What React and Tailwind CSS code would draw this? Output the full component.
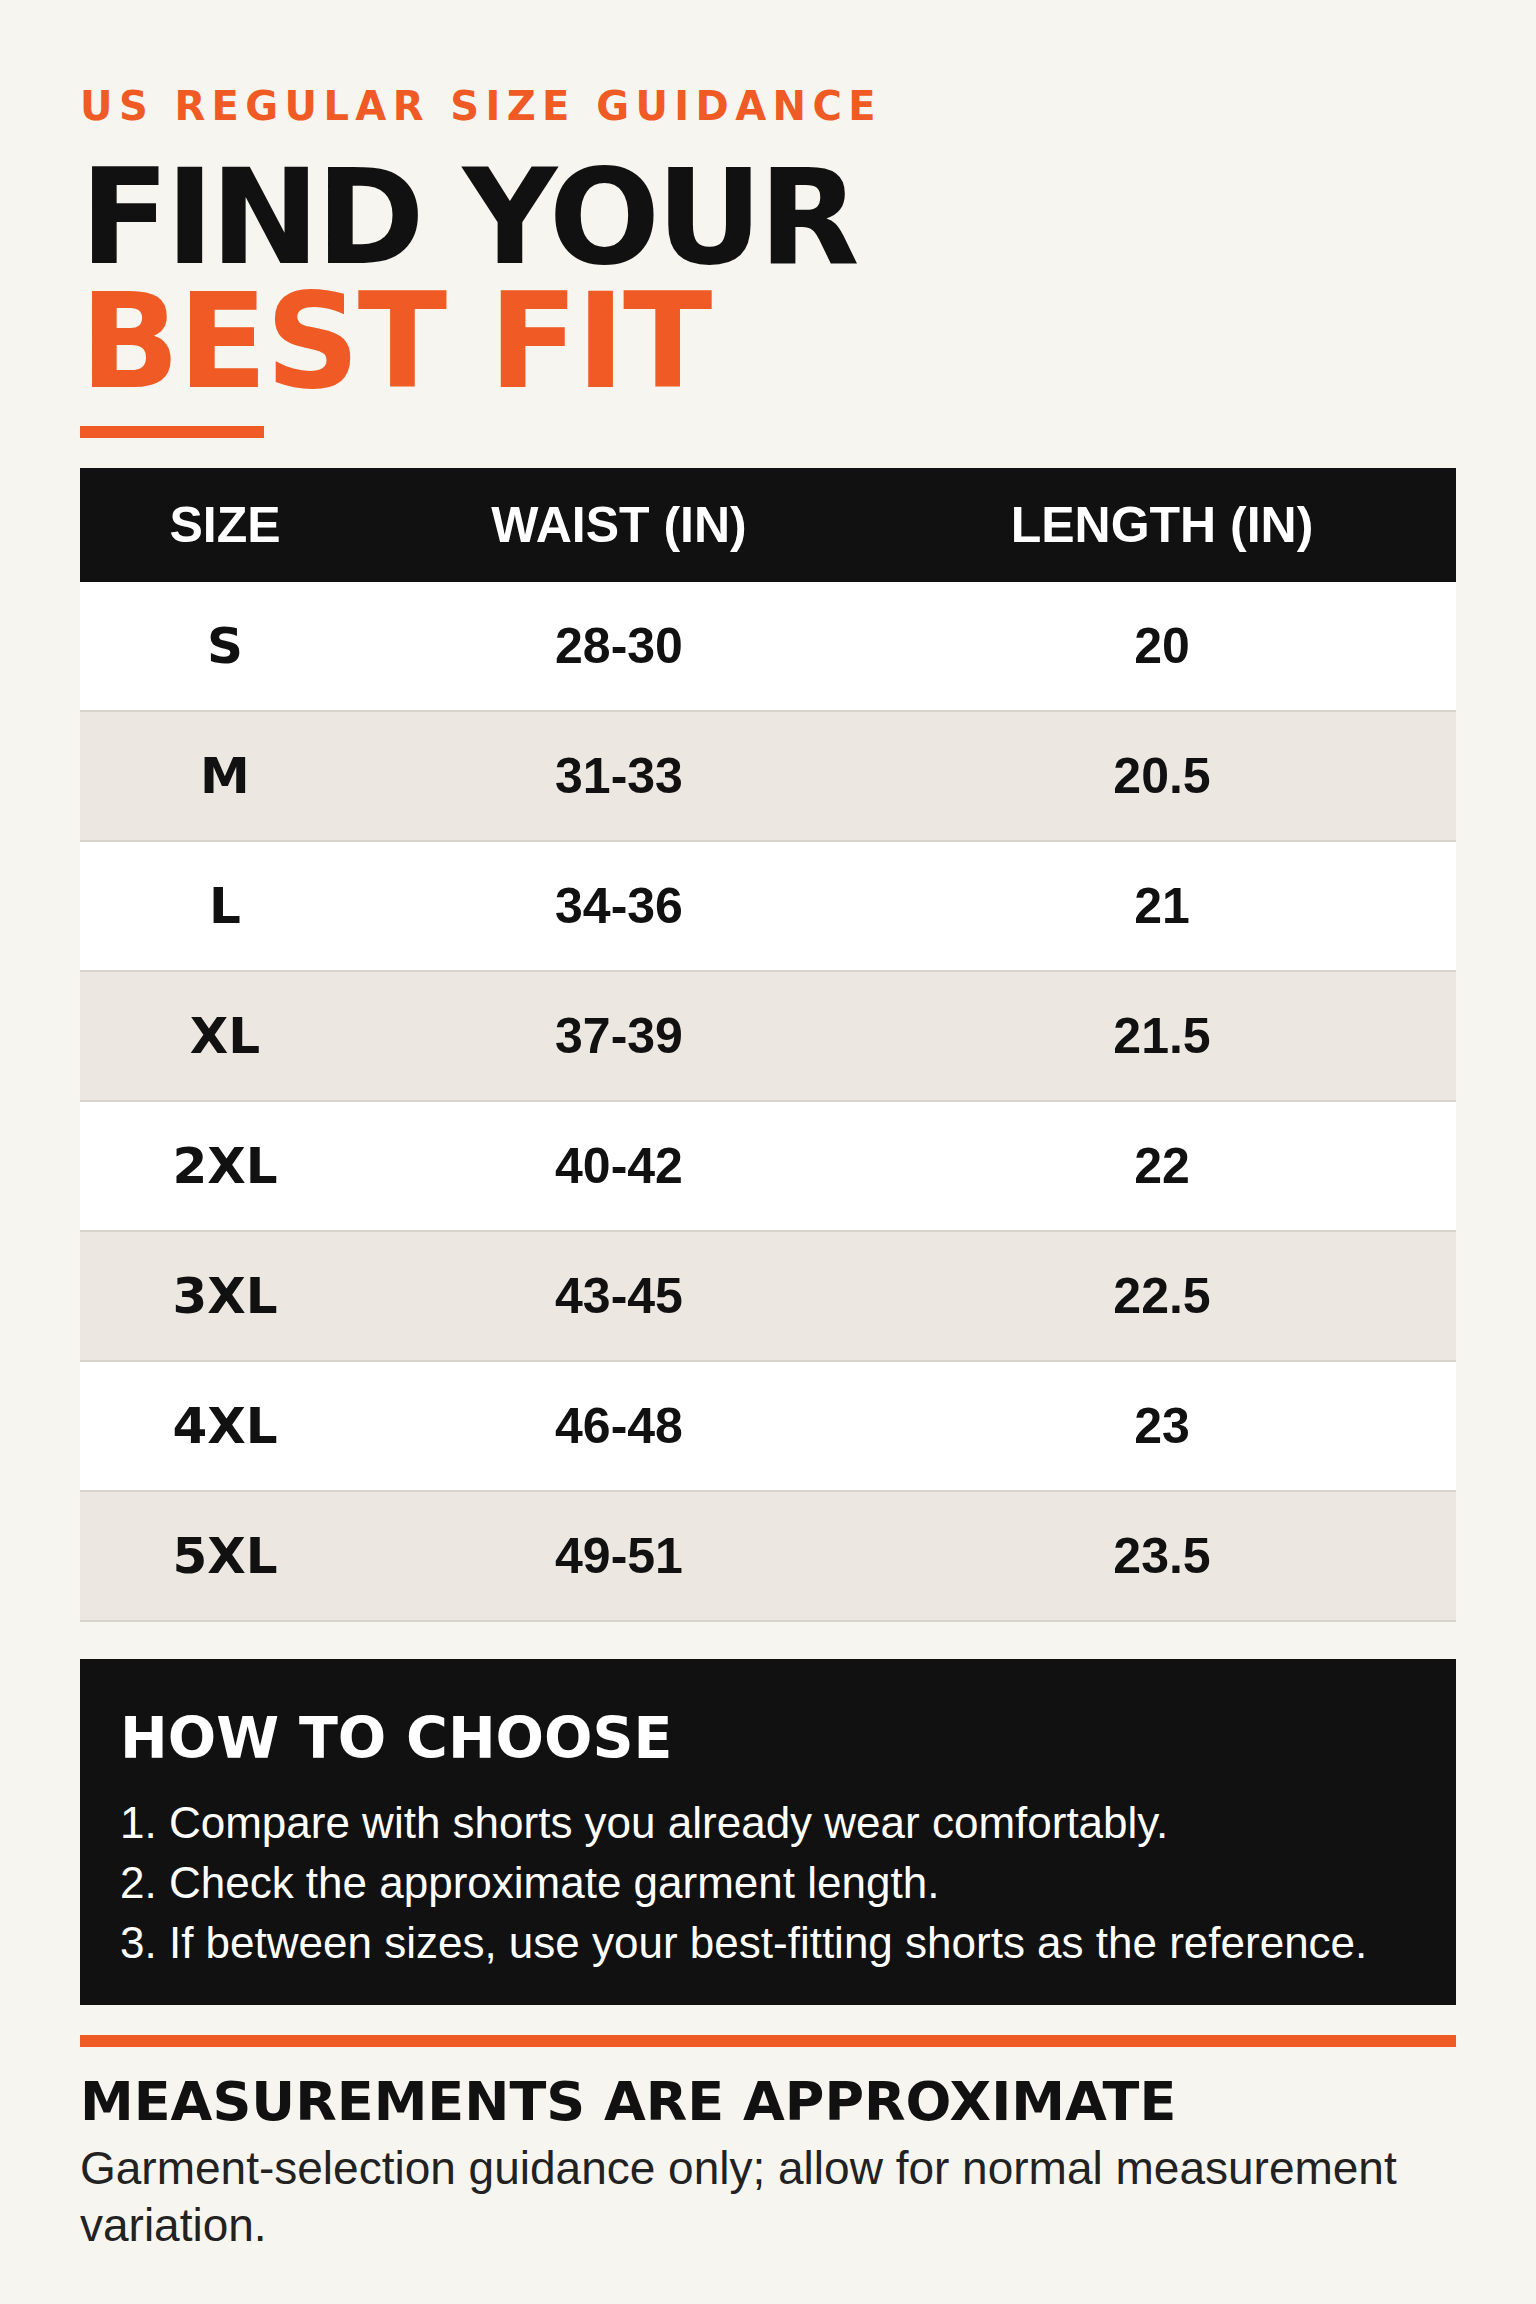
const rows = [
  { size: "S", waist: "28-30", length: "20" },
  { size: "M", waist: "31-33", length: "20.5" },
  { size: "L", waist: "34-36", length: "21" },
  { size: "XL", waist: "37-39", length: "21.5" },
  { size: "2XL", waist: "40-42", length: "22" },
  { size: "3XL", waist: "43-45", length: "22.5" },
  { size: "4XL", waist: "46-48", length: "23" },
  { size: "5XL", waist: "49-51", length: "23.5" },
];

const steps = [
  "1. Compare with shorts you already wear comfortably.",
  "2. Check the approximate garment length.",
  "3. If between sizes, use your best-fitting shorts as the reference.",
];

export default function App() {
  return (
    <div className="min-h-[2304px] bg-[#f6f5f0] px-20 pt-[86px] pb-12 font-['Liberation_Sans',Arial,sans-serif] text-[#111]">
      {/* heading */}
      <p className="font-['DejaVu_Sans',sans-serif] font-bold text-[40px] leading-[40px] tracking-[0.16em] text-[#f05a24]">
        US REGULAR SIZE GUIDANCE
      </p>
      <h1 className="mt-[30px] font-['DejaVu_Sans',sans-serif] font-bold text-[131px] leading-[124px] tracking-[-0.03em]">
        <span className="block">FIND YOUR</span>
        <span className="block tracking-[-0.015em] text-[#f05a24]">BEST FIT</span>
      </h1>
      <div className="mt-[22px] h-3 w-[184px] bg-[#f05a24]" />

      {/* size table */}
      <div className="mt-[30px] w-full">
        <div className="grid h-[114px] grid-cols-[290px_498px_588px] items-center bg-[#111] text-center text-[50px] font-bold text-white">
          <div>SIZE</div>
          <div>WAIST (IN)</div>
          <div>LENGTH (IN)</div>
        </div>
        {rows.map((r, i) => (
          <div
            key={r.size}
            className={`grid h-[130px] grid-cols-[290px_498px_588px] items-center border-b-2 border-[#d8d4cc] text-center text-[50px] font-bold ${
              i % 2 === 0 ? "bg-white" : "bg-[#ece7e0]"
            }`}
          >
            <div className="font-['DejaVu_Sans',sans-serif]">{r.size}</div>
            <div>{r.waist}</div>
            <div>{r.length}</div>
          </div>
        ))}
      </div>

      {/* how to choose */}
      <div className="mt-[37px] bg-[#111] pl-[40px] pr-10 pt-[50px] pb-8 text-white">
        <h2 className="font-['DejaVu_Sans',sans-serif] font-bold text-[57px] leading-[58px]">HOW TO CHOOSE</h2>
        <ol className="mt-[26px] text-[44px] leading-[60px]">
          {steps.map((s) => (
            <li key={s}>{s}</li>
          ))}
        </ol>
      </div>

      {/* note */}
      <div className="mt-[30px] h-3 w-full bg-[#f05a24]" />
      <h2 className="mt-[28px] font-['DejaVu_Sans',sans-serif] font-bold text-[54px] leading-[54px]">
        MEASUREMENTS ARE APPROXIMATE
      </h2>
      <p className="mt-[11px] text-[46px] leading-[57px] text-[#222]">
        Garment-selection guidance only; allow for normal measurement variation.
      </p>
    </div>
  );
}
